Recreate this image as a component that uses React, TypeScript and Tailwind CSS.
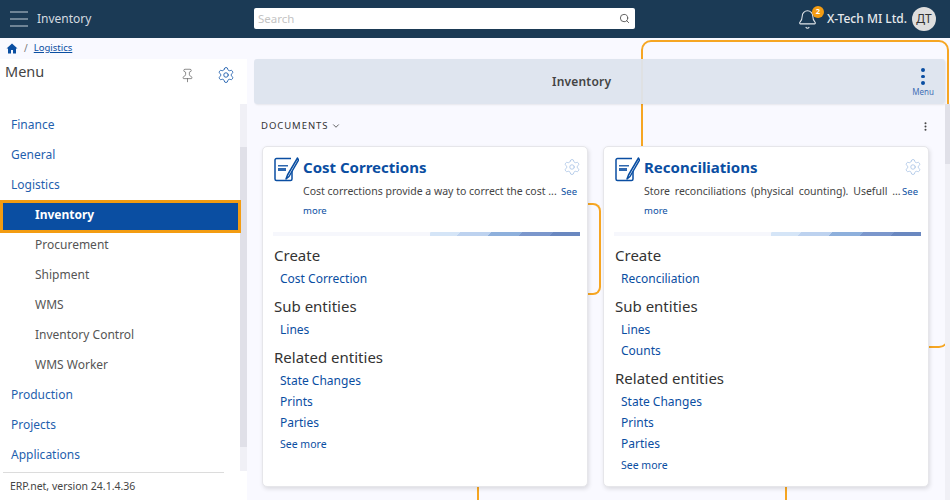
import React from "react";
import { Settings, Pin, Search, Bell, ChevronDown, EllipsisVertical } from "lucide-react";

const DocIcon = () => (
  <svg width="25" height="25" viewBox="0 0 25 25" fill="none" className="shrink-0 ml-[1px]">
    <path d="M18 10v12a1.5 1.5 0 0 1-1.5 1.5H2.5A1.5 1.5 0 0 1 1 22V3a1.5 1.5 0 0 1 1.5-1.5H17" stroke="#0a4ea2" strokeWidth="1.5" />
    <path d="M4 8h10v1.6H4zM4 11h8v3H4z" fill="#0a4ea2" opacity="0.85" />
    <path d="M23.5 1 13.5 18l-1.5 4 3-2.5L24.5 3z" fill="#fff" stroke="#0a4ea2" strokeWidth="1.5" strokeLinejoin="round" />
  </svg>
);

const Section = ({ title, links }: { title: string; links: string[] }) => (
  <div className="mb-[4px]">
    <div className="text-[15px] leading-[21px] text-[#333] pt-[3px] pb-[2px]">{title}</div>
    {links.map((l) => (
      <div key={l} className="text-[12px] leading-[21px] text-[#0a4ea2] pl-[6px]">{l}</div>
    ))}
  </div>
);

const Card = ({ title, desc, sections }: { title: string; desc: React.ReactNode; sections: { title: string; links: string[] }[] }) => (
  <div className="w-[326px] h-[341px] bg-white rounded-[5px] border border-[#e6e6ea] shadow-[1px_2px_4px_rgba(0,0,0,0.12)] pt-[10px] pl-[10px] pr-[7px] relative z-10">
    <div className="flex gap-[5px] pr-[3px]">
      <div className="w-[25px] shrink-0"><DocIcon /></div>
      <div className="flex-1 min-w-0">
        <div className="flex justify-between items-start">
          <span className="text-[15px] leading-[20px] font-bold text-[#0a4ea2]">{title}</span>
          <Settings size={18} strokeWidth={1.1} className="text-[#a9c3e6] mt-[1px] -mr-[4px]" />
        </div>
        <div className="text-[10.5px] leading-[19px] text-[#444] mt-[5px] h-[38px] whitespace-nowrap">
          {desc}
        </div>
      </div>
    </div>
    <div className="h-[4px] mt-[12px] relative bg-[#f6f7fc] overflow-hidden">
      <div className="absolute inset-y-0 right-0 w-[150px] bg-[linear-gradient(135deg,#f6f7fc_0,#d5e5f7_1%,#d5e5f7_20%,#bdd2ef_20%,#bdd2ef_40%,#8eb0dc_40%,#8eb0dc_60%,#7b97cc_60%,#7b97cc_80%,#6a88c0_80%,#6a88c0_100%)]" />
    </div>
    <div className="mt-[6px] pl-[1px]">
      {sections.map((s) => <Section key={s.title} {...s} />)}
      <div className="text-[10.5px] leading-[21px] text-[#0a4ea2] pl-[6px] -mt-[3px]">See more</div>
    </div>
  </div>
);

const menu: { t: string; sub?: boolean; active?: boolean }[] = [
  { t: "Finance" }, { t: "General" }, { t: "Logistics" },
  { t: "Inventory", sub: true, active: true },
  { t: "Procurement", sub: true }, { t: "Shipment", sub: true }, { t: "WMS", sub: true },
  { t: "Inventory Control", sub: true }, { t: "WMS Worker", sub: true },
  { t: "Production" }, { t: "Projects" }, { t: "Applications" },
];

export default function App() {
  return (
    <div className="relative w-[950px] h-[500px] overflow-hidden bg-[#f9f9ff] flex flex-col font-['Noto_Sans','Open_Sans',sans-serif]">
      {/* orange tour highlight lines */}
      <div className="absolute left-[641px] top-[40px] w-[308px] h-[308px] rounded-[10px] border-2 border-[#f6a623]" />
      <div className="absolute left-[580px] top-[203px] w-[21px] h-[92px] rounded-r-[8px] border-2 border-l-0 border-[#f6a623]" />
      <div className="absolute left-[477px] top-[480px] w-[2px] h-[20px] bg-[#f6a623]" />
      <div className="absolute left-[785px] top-[480px] w-[2px] h-[20px] bg-[#f6a623]" />

      <header className="h-[38px] shrink-0 bg-[#1b3a55] flex items-center relative z-10">
        <div className="w-[18px] ml-[10px] flex flex-col gap-[5px]">
          <div className="h-[2px] bg-[#6f8496]" /><div className="h-[2px] bg-[#6f8496]" /><div className="h-[2px] bg-[#6f8496]" />
        </div>
        <div className="ml-[9px] text-[12px] text-[#d5dbe0] w-[217px]">Inventory</div>
        <div className="w-[381px] h-[21px] bg-white rounded-[2px] flex items-center justify-between px-[4px] -mt-[1px]">
          <span className="text-[11.5px] text-[#c4c4c4]">Search</span>
          <Search size={11} className="text-[#555] mr-[1px]" />
        </div>
        <div className="ml-auto flex items-center mr-[14px]">
          <div className="relative">
            <Bell size={21} strokeWidth={1.2} className="text-[#e2e6ea]" />
            <div className="absolute -top-[3px] -right-[6px] w-[12px] h-[12px] rounded-full bg-[#f39c12] text-white text-[7.5px] font-bold flex items-center justify-center leading-none">2</div>
          </div>
          <span className="ml-[9px] text-[12px] font-medium text-[#e6e9ec]">X-Tech MI Ltd.</span>
          <div className="ml-[5px] w-[24px] h-[24px] rounded-full bg-[#dedede] text-[#333] text-[12px] flex items-center justify-center">ДТ</div>
        </div>
      </header>

      <div className="h-[21px] shrink-0 flex items-center pl-[6px] relative z-10">
        <svg width="12" height="11" viewBox="0 0 24 22"><path d="M12 1 1 11h3v10h6v-7h4v7h6V11h3z" fill="#0a4ea2" /></svg>
        <span className="ml-[6px] text-[10px] text-[#777]">/</span>
        <span className="ml-[6px] text-[9.5px] text-[#0a4ea2] underline">Logistics</span>
      </div>

      <div className="flex-1 flex min-h-0">
        <aside className="w-[247px] shrink-0 bg-white relative z-10 flex flex-col">
          <div className="h-[45px] shrink-0 flex items-start">
            <span className="ml-[5px] text-[14.5px] leading-[24px] text-[#444]">Menu</span>
            <Pin size={15} strokeWidth={1.2} className="ml-auto mt-[9px] text-[#666]" />
            <Settings size={18} strokeWidth={1.2} className="ml-[22px] mr-[12px] mt-[7px] text-[#1f5fae]" />
          </div>
          <div className="flex flex-1 min-h-0">
            <div className="w-[240px] flex flex-col">
              <div className="pt-[6px] flex-1">
                {menu.map((m) =>
                  m.active ? (
                    <div key={m.t} className="h-[33px] -mb-[3px] -mr-[1px] relative border-[3px] border-[#f39c12] bg-[#0a4ea2] flex items-center pl-[32px] pb-[3px] text-[12px] font-bold text-white">{m.t}</div>
                  ) : (
                    <div key={m.t} className={m.sub ? "h-[30px] flex items-center pl-[35px] text-[12px] text-[#555]" : "h-[30px] flex items-center pl-[11px] text-[12px] text-[#1f5fae]"}>{m.t}</div>
                  )
                )}
              </div>
              <div className="ml-[3px] mr-[16px] border-t border-[#dcdcdc] h-[28px] flex items-center pl-[7px] text-[10.5px] text-[#444]">ERP.net, version 24.1.4.36</div>
            </div>
            <div className="w-[7px] bg-[#f0f0f6] h-[367px]">
              <div className="mt-[43px] h-[300px] bg-[#e0e0e8]" />
            </div>
          </div>
        </aside>

        <main className="flex-1 min-w-0 pl-[7px] flex flex-col relative">
          <div className="h-[45px] w-[691px] shrink-0 bg-[#dde4ee]/95 rounded-[3px] shadow-[1px_1px_2px_rgba(0,0,0,0.08)] flex items-center relative">
            <span className="absolute left-[298px] text-[12px] font-semibold tracking-[0.2px] text-[#444]">Inventory</span>
            <div className="ml-auto mr-[11px] w-[22px] flex flex-col items-center mt-[3px]">
              <div className="flex flex-col gap-[3px]">
                <div className="w-[3.5px] h-[3.5px] rounded-full bg-[#0a4ea2]" />
                <div className="w-[3.5px] h-[3.5px] rounded-full bg-[#0a4ea2]" />
                <div className="w-[3.5px] h-[3.5px] rounded-full bg-[#0a4ea2]" />
              </div>
              <span className="text-[8px] leading-[12px] mt-[1px] text-[#3f6fb5]">Menu</span>
            </div>
          </div>
          <div className="h-[42px] shrink-0 flex items-center pl-[7px] pr-[15px] pt-[2px]">
            <span className="text-[9.5px] tracking-[0.95px] text-[#333]">DOCUMENTS</span>
            <ChevronDown size={10} className="ml-[3px] text-[#444]" />
            <EllipsisVertical size={11} strokeWidth={2.4} className="ml-auto text-[#444] mr-[4px]" />
          </div>
          <div className="flex gap-[15px] pl-[9px] -ml-[1px]">
            <Card
              title="Cost Corrections"
              desc={<><div className="flex justify-between"><span>Cost corrections provide a way to correct the cost ...</span><span className="text-[9.5px] text-[#0a4ea2]">See</span></div><div className="text-[9.5px] text-[#0a4ea2]">more</div></>}
              sections={[
                { title: "Create", links: ["Cost Correction"] },
                { title: "Sub entities", links: ["Lines"] },
                { title: "Related entities", links: ["State Changes", "Prints", "Parties"] },
              ]}
            />
            <Card
              title="Reconciliations"
              desc={<><div className="flex justify-between"><span className="[word-spacing:2.1px]">Store reconciliations (physical counting). Usefull ...</span><span className="text-[9.5px] text-[#0a4ea2]">See</span></div><div className="text-[9.5px] text-[#0a4ea2]">more</div></>}
              sections={[
                { title: "Create", links: ["Reconciliation"] },
                { title: "Sub entities", links: ["Lines", "Counts"] },
                { title: "Related entities", links: ["State Changes", "Prints", "Parties"] },
              ]}
            />
          </div>
          <div className="absolute right-0 top-[45px] w-[5px] h-[396px] bg-[#f0f0f6]">
            <div className="h-[60px] bg-[#e0e0e8]" />
          </div>
        </main>
      </div>
    </div>
  );
}
